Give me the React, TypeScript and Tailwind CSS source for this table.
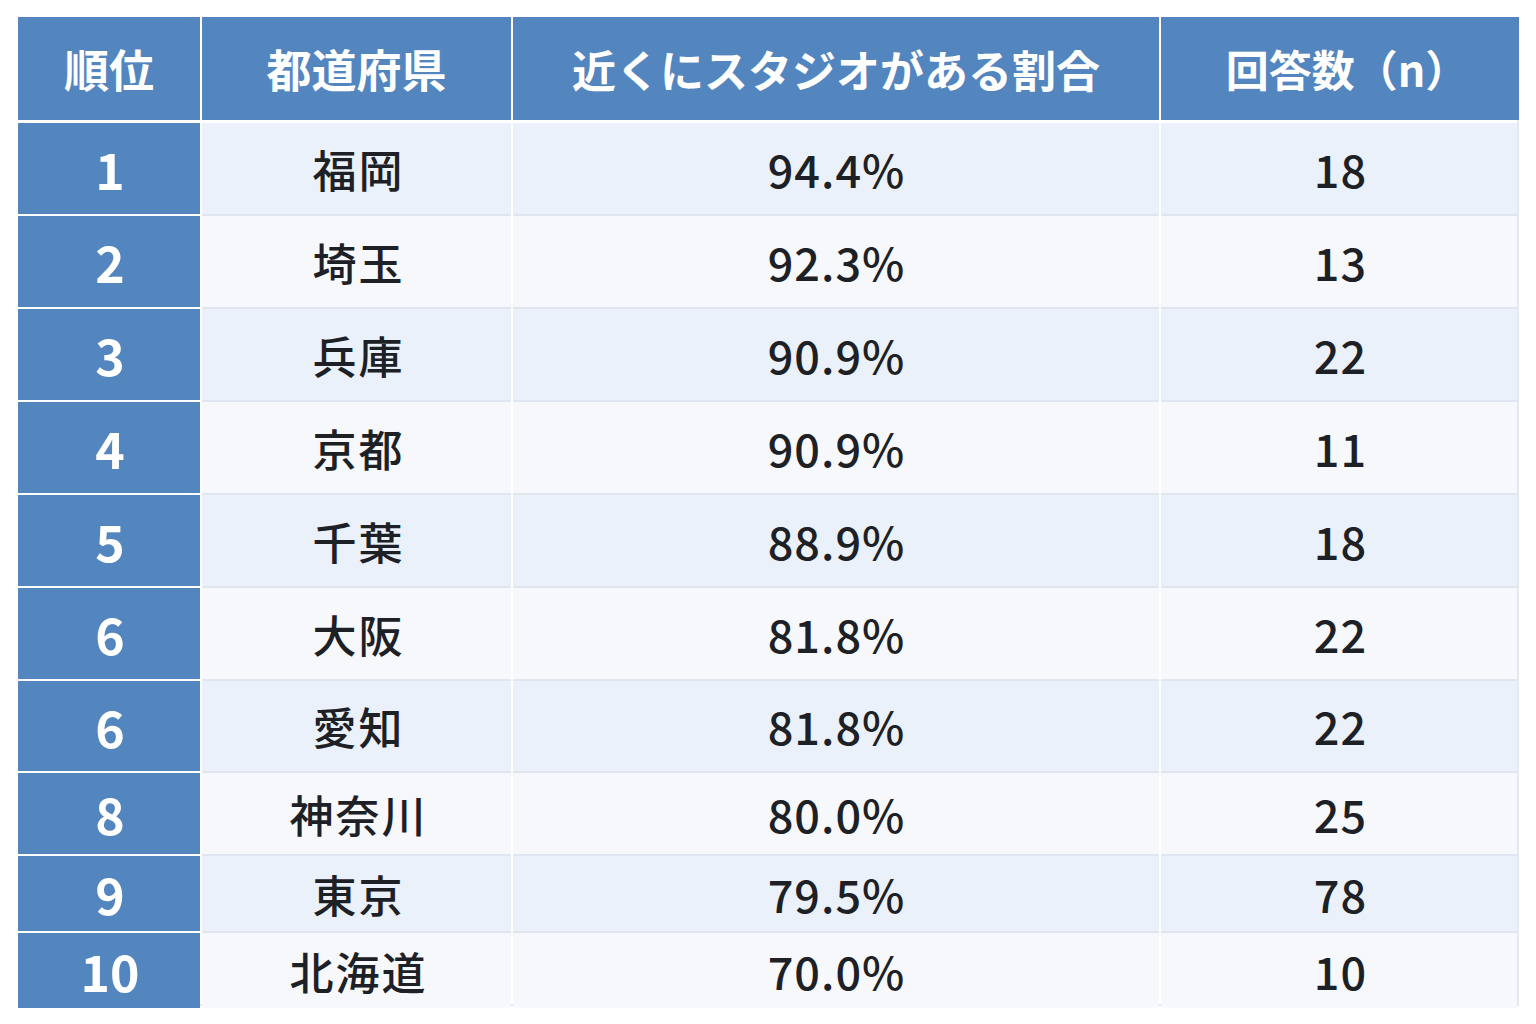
const rows = [
  { rank: '1', pref: '福岡', pct: '94.4%', n: '18', h: 'h-[94px]' },
  { rank: '2', pref: '埼玉', pct: '92.3%', n: '13', h: 'h-[93px]' },
  { rank: '3', pref: '兵庫', pct: '90.9%', n: '22', h: 'h-[93px]' },
  { rank: '4', pref: '京都', pct: '90.9%', n: '11', h: 'h-[93px]' },
  { rank: '5', pref: '千葉', pct: '88.9%', n: '18', h: 'h-[93px]' },
  { rank: '6', pref: '大阪', pct: '81.8%', n: '22', h: 'h-[93px]' },
  { rank: '6', pref: '愛知', pct: '81.8%', n: '22', h: 'h-[92px]' },
  { rank: '8', pref: '神奈川', pct: '80.0%', n: '25', h: 'h-[83px]' },
  { rank: '9', pref: '東京', pct: '79.5%', n: '78', h: 'h-[77px]' },
  { rank: '10', pref: '北海道', pct: '70.0%', n: '10', h: 'h-[73px]' },
];

const font = { fontFamily: '"Noto Sans CJK JP", "Noto Sans", sans-serif' };

export default function App() {
  return (
    <div className="min-h-[1024px] w-full bg-white pl-[18px] pt-[17px]" style={font}>
      <div className="w-[1501px]">
        <div className="grid h-[103px] grid-cols-[182px_309px_646px_358px] gap-x-[2px] text-[45px] font-bold text-white">
          <div className="flex items-center justify-center bg-[#5385bf]">順位</div>
          <div className="flex items-center justify-center bg-[#5385bf]">都道府県</div>
          <div className="flex items-center justify-center bg-[#5385bf] text-[44px]">近くにスタジオがある割合</div>
          <div className="flex items-center justify-center bg-[#5385bf] pl-[14px] text-[43px]">回答数（n）</div>
        </div>
        <div className="border-b-2 border-r-2 border-[#e3e9f1]">
          {rows.map((r, i) => {
            const bg = i % 2 === 0 ? 'bg-[#eaf1fa]' : 'bg-[#f6f8fc]';
            const line = i === 0 ? '' : 'border-t-2 border-[#dfe6f0]';
            return (
              <div key={i} className={`grid grid-cols-[182px_309px_646px_356px] gap-x-[2px] ${r.h} ${i === 0 ? 'border-t-[3px] border-white' : ''}`}>
                <div className={`flex items-center justify-center bg-[#5385bf] pl-[2px] text-[50px] font-semibold text-white ${i === 0 ? '' : 'border-t-2 border-white'}`}>
                  {r.rank}
                </div>
                <div className={`flex items-center justify-center ${bg} pl-[4px] text-[44px] font-medium tracking-[2px] text-[#1d2126] ${line}`}>
                  {r.pref}
                </div>
                <div className={`flex items-center justify-center ${bg} pl-[1px] text-[45px] font-medium tracking-[1px] text-[#1d2126] ${line}`}>
                  {r.pct}
                </div>
                <div className={`flex items-center justify-center ${bg} pl-[3px] text-[45px] font-medium tracking-[1px] text-[#1d2126] ${line}`}>
                  {r.n}
                </div>
              </div>
            );
          })}
        </div>
      </div>
    </div>
  );
}
